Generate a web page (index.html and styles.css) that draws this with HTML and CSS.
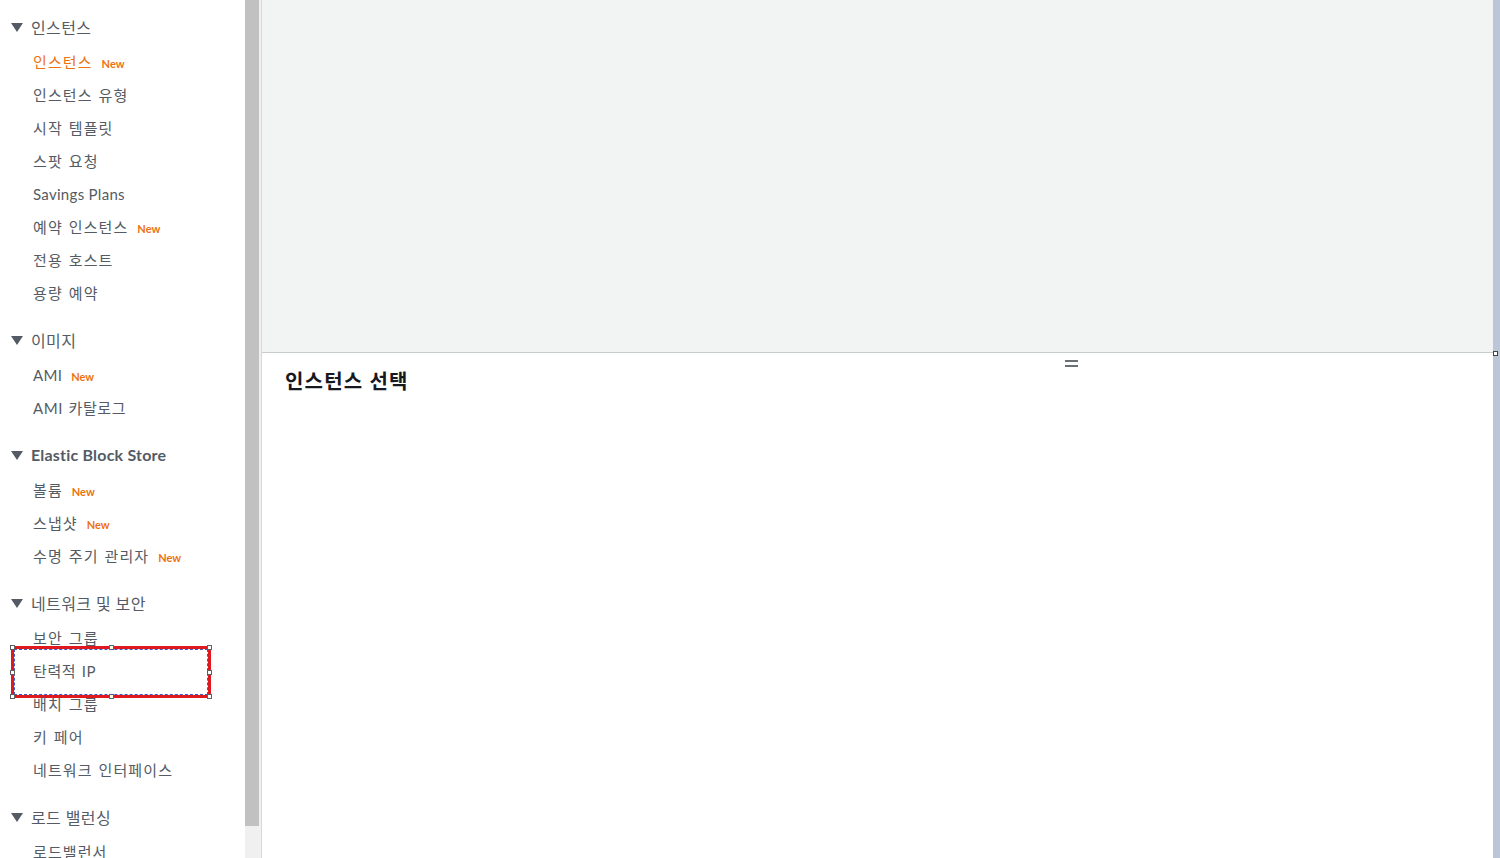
FILE: index.html
```html
<!DOCTYPE html>
<html lang="ko">
<head>
    <meta charset="UTF-8">
    <meta name="viewport" content="width=device-width, initial-scale=1.0">
    <title>EC2 콘솔</title>
    <link rel="stylesheet" href="styles.css">
</head>
<body>

    <div class="layout">
        <nav class="sidebar">
            <div class="section">
                <div class="section-title"><span class="caret"></span>인스턴스</div>
                <div class="item active">인스턴스<span class="new">New</span></div>
                <div class="item">인스턴스 유형</div>
                <div class="item">시작 템플릿</div>
                <div class="item">스팟 요청</div>
                <div class="item latin">Savings Plans</div>
                <div class="item">예약 인스턴스<span class="new">New</span></div>
                <div class="item">전용 호스트</div>
                <div class="item">용량 예약</div>
            </div>
            <div class="section">
                <div class="section-title"><span class="caret"></span>이미지</div>
                <div class="item latin">AMI<span class="new">New</span></div>
                <div class="item mixed">AMI 카탈로그</div>
            </div>
            <div class="section">
                <div class="section-title bold"><span class="caret"></span>Elastic Block Store</div>
                <div class="item">볼륨<span class="new">New</span></div>
                <div class="item">스냅샷<span class="new">New</span></div>
                <div class="item">수명 주기 관리자<span class="new">New</span></div>
            </div>
            <div class="section">
                <div class="section-title"><span class="caret"></span>네트워크 및 보안</div>
                <div class="item">보안 그룹</div>
                <div class="item mixed">탄력적 IP
                    <div class="select-box">
                        <span class="handle h-tl"></span><span class="handle h-tm"></span><span class="handle h-tr"></span>
                        <span class="handle h-ml"></span><span class="handle h-mr"></span>
                        <span class="handle h-bl"></span><span class="handle h-bm"></span><span class="handle h-br"></span>
                    </div>
                </div>
                <div class="item">배치 그룹</div>
                <div class="item">키 페어</div>
                <div class="item">네트워크 인터페이스</div>
            </div>
            <div class="section">
                <div class="section-title"><span class="caret"></span>로드 밸런싱</div>
                <div class="item">로드밸런서</div>
            </div>
        </nav>

        <div class="scrollbar"><div class="thumb"></div></div>

        <main class="main">
            <div class="top-panel">
                <span class="corner-handle"></span>
            </div>
            <div class="bottom-panel">
                <div class="drag-handle"><span></span><span></span></div>
                <h2>인스턴스 선택</h2>
            </div>
        </main>

        <div class="edge"></div>
    </div>

</body>
</html>
```

FILE: styles.css
```css
html, body {
    margin: 0;
    padding: 0;
    height: 100%;
    overflow: hidden;
}
body {
    font-family: Lato, "Noto Sans CJK KR", sans-serif;
    color: #545b64;
    background: #fff;
}
.layout {
    display: flex;
    height: 858px;
}
.sidebar {
    width: 245px;
    flex-shrink: 0;
    padding-top: 8px;
    box-sizing: border-box;
    overflow: hidden;
}
.section {
    margin-bottom: 12px;
}
.section-title {
    height: 37px;
    display: flex;
    align-items: center;
    padding-left: 11px;
    font-size: 16px;
    letter-spacing: 0.4px;
    color: #545b64;
}
.section-title.bold {
    font-weight: 700;
    letter-spacing: 0.2px;
}
.caret {
    width: 0;
    height: 0;
    border-left: 6px solid transparent;
    border-right: 6px solid transparent;
    border-top: 9px solid #545b64;
    margin-right: 8px;
    margin-top: 1px;
}
.item {
    position: relative;
    height: 33px;
    display: flex;
    align-items: center;
    padding-left: 33px;
    font-size: 15px;
    letter-spacing: 1.1px;
    word-spacing: 1px;
    color: #545b64;
}
.item.latin {
    letter-spacing: 0.3px;
    word-spacing: 0;
}
.item.mixed {
    letter-spacing: 0.6px;
}
.item.active {
    color: #ec7211;
}
.new {
    color: #ec7211;
    font-size: 11px;
    font-weight: 700;
    letter-spacing: 0;
    margin-left: 9px;
    margin-top: 3px;
}
.select-box {
    position: absolute;
    left: 11px;
    top: -8px;
    width: 194px;
    height: 46px;
    border: 3px solid #e0191f;
}
.select-box::before {
    content: "";
    position: absolute;
    inset: 0;
    border: 1px dashed #3b5cc4;
}
.handle {
    position: absolute;
    width: 3px;
    height: 3px;
    background: #fff;
    border: 1px solid #606060;
    z-index: 1;
}
.h-tl { left: -4px; top: -4px; }
.h-tm { left: 95px; top: -4px; }
.h-tr { right: -4px; top: -4px; }
.h-ml { left: -4px; top: 21px; }
.h-mr { right: -4px; top: 21px; }
.h-bl { left: -4px; bottom: -4px; }
.h-bm { left: 95px; bottom: -4px; }
.h-br { right: -4px; bottom: -4px; }

.scrollbar {
    width: 16px;
    flex-shrink: 0;
    background: #f0f0f0;
}
.thumb {
    width: 14px;
    height: 826px;
    background: #c1c1c1;
}
.main {
    flex: 1;
    display: flex;
    flex-direction: column;
    border-left: 1px solid #d5dbdb;
}
.top-panel {
    position: relative;
    height: 352px;
    background: #f2f3f3;
    border-bottom: 1px solid #c6cccc;
}
.corner-handle {
    position: absolute;
    right: -5px;
    bottom: -4px;
    width: 3px;
    height: 3px;
    background: #fff;
    border: 1px solid #444;
    z-index: 2;
}
.bottom-panel {
    position: relative;
    flex: 1;
    padding: 13px 23px;
}
.bottom-panel h2 {
    margin: 0;
    font-size: 20px;
    letter-spacing: 1.2px;
    font-weight: 700;
    color: #16191f;
    line-height: 30px;
}
.drag-handle {
    position: absolute;
    left: 803px;
    top: 7px;
    display: flex;
    flex-direction: column;
    gap: 3px;
}
.drag-handle span {
    width: 13px;
    height: 2px;
    background: #687078;
}
.edge {
    width: 7px;
    flex-shrink: 0;
    background: #bcc6d9;
}
```
